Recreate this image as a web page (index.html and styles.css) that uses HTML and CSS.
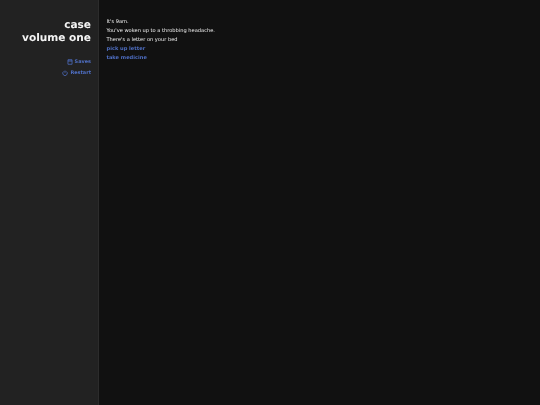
FILE: index.html
```html
<!DOCTYPE html>
<html lang="en">
<head>
<meta charset="utf-8">
<title>case volume one</title>
<link rel="stylesheet" href="styles.css">
</head>
<body>
<div class="layout">
  <aside class="sidebar">
    <h1 class="title">case<br>volume one</h1>
    <nav class="actions">
      <a class="action" href="#">
        <svg class="icon" viewBox="0 0 16 16"><path d="M2.5 2h11v12h-11z M2.5 5.5h11 M5 2v2 M11 2v2" fill="none" stroke="currentColor" stroke-width="2"/></svg>
        Saves
      </a>
      <a class="action" href="#">
        <svg class="icon" viewBox="0 0 16 16"><path d="M5 3.6a6 6 0 1 0 6 0 M8 1.5v6" fill="none" stroke="currentColor" stroke-width="2"/></svg>
        Restart
      </a>
    </nav>
  </aside>
  <main class="story">
    <p>It's 9am.</p>
    <p>You've woken up to a throbbing headache.</p>
    <p>There's a letter on your bed</p>
    <p><a class="choice" href="#">pick up letter</a></p>
    <p><a class="choice" href="#">take medicine</a></p>
  </main>
</div>
</body>
</html>
```
FILE: styles.css
```css
html, body {
  margin: 0;
  height: 100%;
  background: #111111;
  font-family: "DejaVu Sans", sans-serif;
  text-rendering: geometricPrecision;
}
.layout {
  display: flex;
  height: 405px;
  will-change: transform;
}
.sidebar {
  width: 99px;
  box-sizing: border-box;
  padding: 18.5px 7px 0 0;
  background: #222222;
  border-right: 1px solid #2c2c2c;
  text-align: right;
}
.title {
  margin: 0;
  font-size: 10.55px;
  line-height: 13px;
  font-weight: 700;
  color: #f4f4f4;
}
.actions {
  display: flex;
  flex-direction: column;
  align-items: flex-end;
  gap: 5.5px;
  margin-top: 14.25px;
}
.action {
  display: flex;
  align-items: center;
  gap: 2px;
  font-size: 4.95px;
  line-height: 6px;
  font-weight: 700;
  color: #4f6fc4;
  text-decoration: none;
}
.icon {
  width: 6px;
  height: 6px;
}
.story {
  flex: 1;
  padding: 18.4px 0 0 7.5px;
  font-size: 5.1px;
  line-height: 9px;
  color: #f2f2f2;
}
.story p {
  margin: 0;
}
.choice {
  font-weight: 700;
  color: #4f6fc4;
  text-decoration: none;
}
```
